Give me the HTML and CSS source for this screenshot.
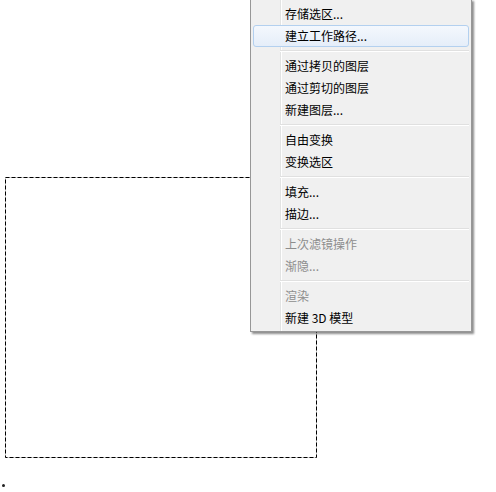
FILE: index.html
```html
<!DOCTYPE html>
<html lang="zh-CN">
  <head>
    <meta charset="UTF-8" />
    <meta name="viewport" content="width=device-width, initial-scale=1.0" />
    <title>建立工作路径</title>
    <link rel="stylesheet" href="styles.css">
  </head>
  <body>
    <main class="canvas">
      <!-- marching ants selection -->
      <svg class="selection" width="312" height="281" viewBox="0 0 312 281">
        <rect x="0.5" y="0.5" width="311" height="280" fill="none" stroke="#d4d4d4" />
        <rect x="0.5" y="0.5" width="311" height="280" fill="none" stroke="#000" stroke-dasharray="4 2" />
      </svg>
      <span class="dot"></span>

      <!-- context menu -->
      <ul class="menu">
        <li class="item">存储选区...</li>
        <li class="item active">建立工作路径...</li>
        <li class="sep"></li>
        <li class="item">通过拷贝的图层</li>
        <li class="item">通过剪切的图层</li>
        <li class="item">新建图层...</li>
        <li class="sep"></li>
        <li class="item">自由变换</li>
        <li class="item">变换选区</li>
        <li class="sep"></li>
        <li class="item">填充...</li>
        <li class="item">描边...</li>
        <li class="sep"></li>
        <li class="item disabled">上次滤镜操作</li>
        <li class="item disabled">渐隐...</li>
        <li class="sep"></li>
        <li class="item disabled">渲染</li>
        <li class="item">新建 3D 模型</li>
      </ul>
    </main>
  </body>
</html>
```

FILE: styles.css
```css
* {
  margin: 0;
  padding: 0;
  box-sizing: border-box;
}

body {
  background: #ffffff;
  font-family: "Noto Sans CJK SC", "Liberation Sans", sans-serif;
  font-size: 12px;
  color: #000;
}

.canvas {
  position: relative;
  width: 496px;
  height: 492px;
  overflow: hidden;
}

.selection {
  position: absolute;
  left: 5px;
  top: 177px;
}

.dot {
  position: absolute;
  left: 2px;
  top: 484px;
  width: 3px;
  height: 3px;
  border-radius: 50%;
  background: #222;
}

/* Win7 style popup menu */
.menu {
  position: absolute;
  left: 250px;
  top: -1px;
  width: 222px;
  padding: 3px 2px 2px;
  list-style: none;
  background-color: #f0f0f0;
  background-image: linear-gradient(to right,
    transparent 29px, #e2e3e3 29px, #e2e3e3 30px,
    #ffffff 30px, #ffffff 31px, transparent 31px);
  border: 1px solid #979797;
  box-shadow: 2px 2px 2px rgba(0, 0, 0, 0.45);
}

.item {
  height: 22px;
  line-height: 22px;
  padding-left: 32px;
  white-space: nowrap;
}

.item.active {
  padding-left: 31px;
  line-height: 20px;
  border: 1px solid #b3d0ef;
  border-radius: 3px;
  background: linear-gradient(#f4f8fd, #e5eef9);
}

.item.disabled {
  color: #8d8d8d;
}

.sep {
  height: 0;
  margin: 3px 0 3px 27px;
  border-top: 1px solid #e0e0e0;
  border-bottom: 1px solid #ffffff;
}
```
